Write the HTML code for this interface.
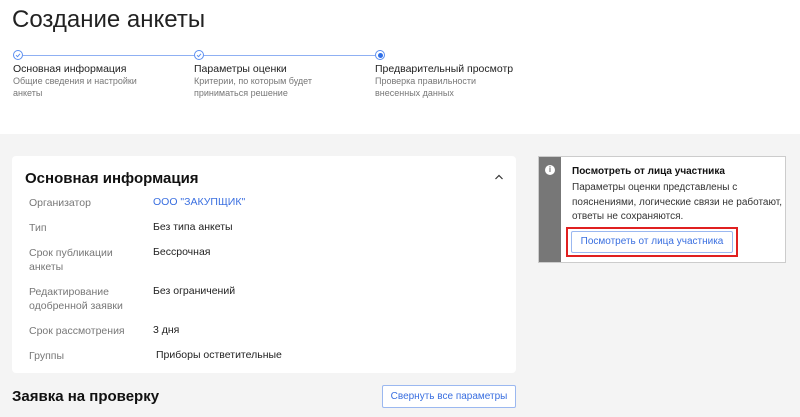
<!DOCTYPE html>
<html><head><meta charset="utf-8"><style>
*{margin:0;padding:0;box-sizing:border-box}
body{width:800px;height:417px;overflow:hidden;background:#f4f4f4;font-family:"Liberation Sans",Arial,sans-serif;color:#222;position:relative}
.top{position:absolute;left:0;top:0;width:800px;height:134px;background:#fff}
h1{position:absolute;left:12px;top:6px;font-size:24px;font-weight:normal;color:#222}
.ic{position:absolute;width:10px;height:10px;border-radius:50%;border:1px solid #5b8ef0;top:50px;background:#fff}
.line{position:absolute;top:55px;height:1px;background:#8fb0f3}
.st{position:absolute;top:63px;font-size:10.5px;color:#222}
.st small{display:block;font-size:9px;color:#777;line-height:11.5px;margin-top:1px}
.card{position:absolute;left:12px;top:156px;width:504px;height:217px;background:#fff;border-radius:4px}
.card h2{position:absolute;left:13px;top:14px;font-size:15px;font-weight:bold;color:#111}
.row{position:absolute;left:17px;font-size:10.5px;color:#777;line-height:14px}
.val{position:absolute;left:141px;font-size:10.5px;color:#222}
h3{position:absolute;left:12px;top:388px;font-size:15px;font-weight:bold;color:#111}
.btn{position:absolute;left:382px;top:385px;width:134px;height:23px;border:1px solid #9bb8f0;border-radius:2px;background:#fff;color:#3a6fe0;font-size:10px;text-align:center;line-height:21px}
.info{position:absolute;left:538px;top:156px;width:248px;height:107px;background:#fff;border:1px solid #ccc}
.stripe{position:absolute;left:0;top:0;width:22px;height:105px;background:#777}
.stripe span{position:absolute;left:6px;top:8px;width:10px;height:10px;border-radius:50%;background:#fff;color:#777;font-size:8px;font-weight:bold;text-align:center;line-height:10px}
</style></head><body>
<div class="top"></div>
<h1>Создание анкеты</h1>
<div class="ic" style="left:13px"><svg width="8" height="8" style="position:absolute;left:0;top:0"><path d="M2 4.2l1.5 1.5L6 2.8" stroke="#5b8ef0" fill="none" stroke-width="1"/></svg></div>
<div class="line" style="left:23px;width:171px"></div>
<div class="ic" style="left:194px"><svg width="8" height="8" style="position:absolute;left:0;top:0"><path d="M2 4.2l1.5 1.5L6 2.8" stroke="#5b8ef0" fill="none" stroke-width="1"/></svg></div>
<div class="line" style="left:204px;width:171px"></div>
<div class="ic" style="left:375px;border:1px solid #5b8ef0"><div style="position:absolute;left:1.5px;top:1.5px;width:5px;height:5px;border-radius:50%;background:#2f6fe8"></div></div>
<div class="st" style="left:13px">Основная информация<small>Общие сведения и настройки<br>анкеты</small></div>
<div class="st" style="left:194px">Параметры оценки<small>Критерии, по которым будет<br>приниматься решение</small></div>
<div class="st" style="left:375px">Предварительный просмотр<small>Проверка правильности<br>внесенных данных</small></div>

<div class="card">
<h2>Основная информация</h2>
<svg style="position:absolute;left:482px;top:17px" width="10" height="8"><path d="M1.5 6L5 2.5 8.5 6" stroke="#333" fill="none" stroke-width="1.2"/></svg>
<div class="row" style="top:40px">Организатор</div><div class="val" style="top:40px;color:#3a6fe0">ООО "ЗАКУПЩИК"</div>
<div class="row" style="top:65px">Тип</div><div class="val" style="top:65px">Без типа анкеты</div>
<div class="row" style="top:90px">Срок публикации<br>анкеты</div><div class="val" style="top:90px">Бессрочная</div>
<div class="row" style="top:129px">Редактирование<br>одобренной заявки</div><div class="val" style="top:129px">Без ограничений</div>
<div class="row" style="top:168px">Срок рассмотрения</div><div class="val" style="top:168px">3 дня</div>
<div class="row" style="top:193px">Группы</div><div class="val" style="top:193px;left:144px">Приборы остветительные</div>
</div>
<h3>Заявка на проверку</h3>
<div class="btn">Свернуть все параметры</div>

<div class="info">
<div class="stripe"><span>i</span></div>
<div style="position:absolute;left:33px;top:9px;font-size:10px;font-weight:bold;color:#111">Посмотреть от лица участника</div>
<div style="position:absolute;left:33px;top:24px;width:212px;font-size:10px;line-height:14.5px;color:#333">Параметры оценки представлены с пояснениями, логические связи не работают, ответы не сохраняются.</div>
<div style="position:absolute;left:27px;top:70px;width:172px;height:30px;border:2px solid #e02020"></div>
<div style="position:absolute;left:32px;top:74px;width:162px;height:22px;border:1px solid #9bb8f0;border-radius:2px;color:#3a6fe0;font-size:10px;text-align:center;line-height:20px">Посмотреть от лица участника</div>
</div>
</body></html>
